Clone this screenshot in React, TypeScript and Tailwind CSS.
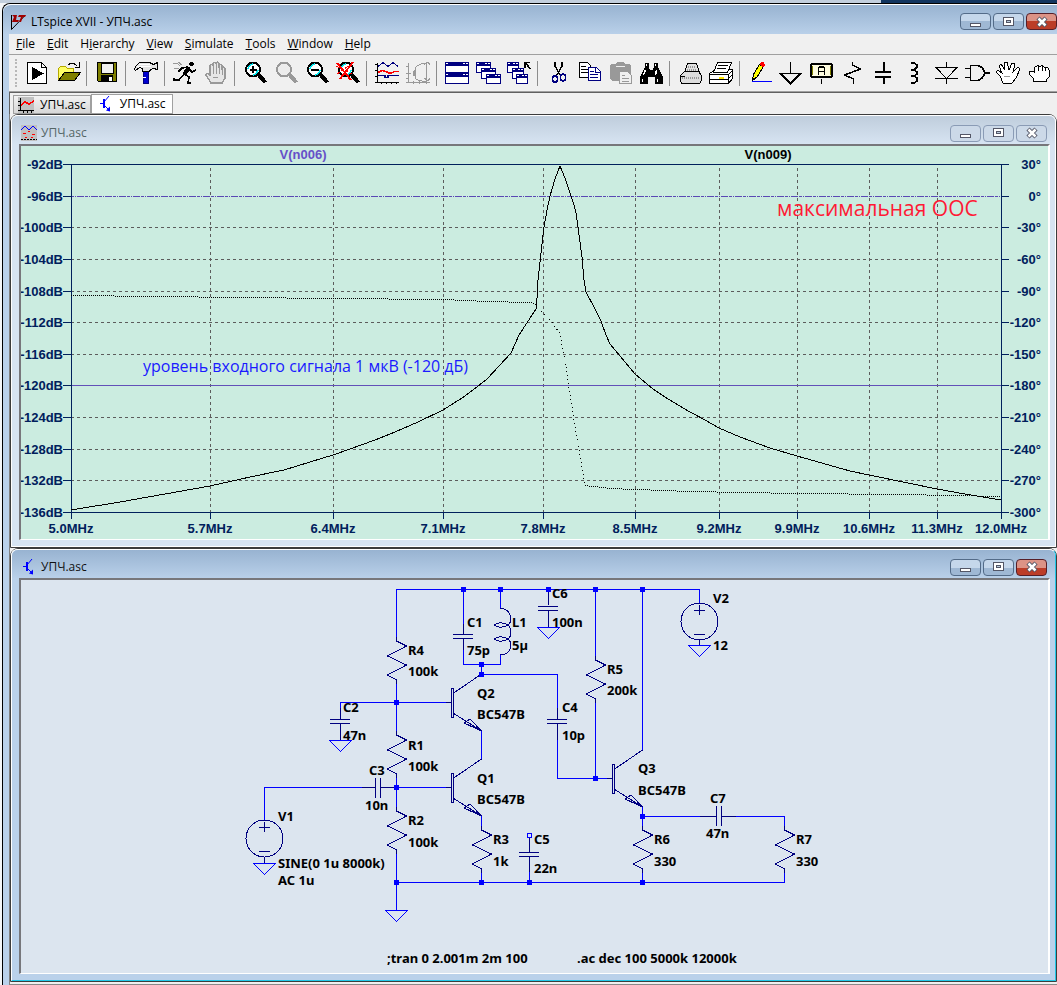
import { Fragment, type ReactNode } from "react";

/* ---------- Toolbar icons, drawn on a 31 x 24 grid ---------- */

const Lens = ({ color = "#000", glass = "#fff" }: { color?: string; glass?: string }) => (
  <>
    <path d="M19 13l7.5 8.5" stroke={color} strokeWidth="4" />
    <circle cx="14" cy="8.5" r="7" fill={glass} stroke={color} strokeWidth="2" />
  </>
);

const Glint = () => (
  <path d="M9 8q1-4 5-5M19 9q-1 4-5 5" stroke="#00e5ee" strokeWidth="1.5" />
);

const Pane = ({ x, y, w = 13, h = 10 }: { x: number; y: number; w?: number; h?: number }) => (
  <>
    <rect x={x + 0.5} y={y + 0.5} width={w} height={h} fill="#fff" stroke="#000080" />
    <rect x={x} y={y} width={w + 1} height="4" fill="#000080" />
    <path d={`M${x + 1} ${y + 1.5}h2M${x + w - 5} ${y + 1.5}h2m1 0h2`} stroke="#fff" />
  </>
);

const icons: Record<string, ReactNode> = {
  Run: (
    <>
      <path d="M6.5 1.5h14l5 5v16h-19z" fill="#fff" stroke="#000" />
      <path d="M20.5 1.5v5h5" stroke="#000" />
      <path d="M11 6l12 6.5-12 6.5z" fill="#000" />
    </>
  ),
  Open: (
    <>
      <path d="M6.5 18.5v-11l2-2h5l2 2h6v5h-9z" fill="#ffff66" stroke="#b5a800" />
      <path d="M12.5 11.5h16l-6 8h-16z" fill="#808000" stroke="#000" />
      <path d="M16 4q4-4 9 1M27.5 1v5.5h-5" stroke="#000" />
    </>
  ),
  Save: (
    <>
      <path d="M6.5 1.5h19v19h-18l-1-1z" fill="#808000" stroke="#000" />
      <path d="M10 2h12v10h-12z" fill="#efefef" stroke="#000" />
      <path d="M10 14h12v7h-12z" fill="#000" />
      <path d="M18 16h3v4h-3z" fill="#fff" />
    </>
  ),
  "Control Panel": (
    <>
      <path d="M13.5 8v14.5h5V8z" fill="#0000d0" stroke="#000080" />
      <path
        d="M4.5 8.500L5.500 5.500L9.500 1.500H19.500L23.500 3.500L27.500 1.500V8.500L23.500 7.500L20.500 8.500L19.500 10.500H12.500V7.500L9.500 6.500L5.500 9.500z"
        fill="#e4e4e4"
        stroke="#000"
      />
      <path d="M9 3.500h11M7 5.500h14" stroke="#fff" />
      <path d="M13 16h3" stroke="#fff" />
    </>
  ),
  Simulate: (
    <>
      <path d="M4 2h4l3 3M5 7h5M9 1l4 3" stroke="#999" />
      <circle cx="22.5" cy="3" r="2.3" fill="#000" />
      <path d="M20 6l-5 8" stroke="#000" strokeWidth="4" />
      <path d="M19 6l-6 1-4 4M20 8l3 3 4-2" stroke="#000" strokeWidth="1.5" />
      <path d="M16 13l4 3-1 6h3M14 14l-4 5H5v-2" stroke="#000" strokeWidth="1.5" />
    </>
  ),
  Halt: (
    <>
      <path
        d="M11 22l-5-8q0-3 4 0V5q2-3 3 0V3q2-3 3 0V2q2-2 3 1v2q2-3 3 0v2q2-2 3 1v9l-3 5h-8z"
        fill="#e6e6e6"
        stroke="#999"
        strokeWidth="1.5"
      />
      <path d="M13.5 4v9M16.5 3v10M19.5 4v9M22.5 6v8M13 16l5 1" stroke="#999" />
    </>
  ),
  "Zoom in": (
    <>
      <Lens />
      <Glint />
      <path d="M14 5v7M10.500 8.500h7" stroke="#000" strokeWidth="2" />
    </>
  ),
  Pan: <Lens color="#999" glass="#ececec" />,
  "Zoom out": (
    <>
      <Lens />
      <Glint />
      <path d="M10 8.500h8" stroke="#000" strokeWidth="2" />
    </>
  ),
  "Zoom full extents": (
    <>
      <Lens />
      <Glint />
      <path d="M5 2l14 17M21 1L8 18" stroke="#f00" strokeWidth="2" />
      <path d="M4 5l18 9M5 13l13-9" stroke="#f00" strokeDasharray="3 2" />
    </>
  ),
  "Autorange y-axis": (
    <>
      <path d="M6.5 2v19.500M4 21.500h24M4 3.500h3M4 9.500h3M4 15.500h3M10.500 21v2M15.500 21v2M20.500 21v2M25.500 21v2" stroke="#000" />
      <path d="M7 5.500l5-4 5 4 5-4 5 4" stroke="#000080" />
      <path d="M7 11.500l4-2 4 1 4 2 5-2h4" stroke="#f00" strokeWidth="1.5" />
      <path d="M7 14.500h7v2h3v-2h11" stroke="#000080" strokeWidth="1.5" />
    </>
  ),
  "Smith chart": (
    <>
      <path d="M6.5 2v19.500M4 21.500h24M4 5.500h3M4 12.500h5M4 17.500h3M11.500 20v3M17.500 20v3M24.500 20v3M24.500 1v20" stroke="#999" />
      <path d="M25 2q-7 0-11 4-3 6 0 12 4 3 11 2M22 4l4-3 2 3M22 17l4 3 2-3" stroke="#999" />
      <path d="M11 10v5M13 7v11" stroke="#999" />
    </>
  ),
  "Tile windows": (
    <>
      <Pane x={4} y={1} w={23} />
      <Pane x={4} y={12} w={23} />
    </>
  ),
  "Cascade windows": (
    <>
      <Pane x={4} y={1} w={14} />
      <Pane x={9} y={7} w={14} />
      <Pane x={14} y={13} w={14} h={9} />
    </>
  ),
  "Close all windows": (
    <>
      <Pane x={4} y={1} w={11} />
      <Pane x={9} y={7} w={11} />
      <Pane x={13} y={13} w={11} h={9} />
      <path d="M22 6.500V1.500h5M22.500 2l5 6" stroke="#000" strokeWidth="1.5" />
    </>
  ),
  Cut: (
    <>
      <path d="M13 1v4l5 9M20 1v4l-5 9" stroke="#000" strokeWidth="1.5" />
      <ellipse cx="13" cy="18" rx="2.500" ry="3.500" stroke="#000080" strokeWidth="1.5" />
      <ellipse cx="21" cy="16.500" rx="2.500" ry="3.500" stroke="#000080" strokeWidth="1.5" />
    </>
  ),
  Copy: (
    <>
      <path d="M6.500 1.500h8l3 3v12h-11z" fill="#fff" stroke="#000" />
      <path d="M8 5.500h5M8 8.500h7M8 11.500h7" stroke="#000" />
      <path d="M15.500 6.500h8l4 4v9h-12z" fill="#fff" stroke="#000080" />
      <path d="M17 10.500h4M17 13.500h8M17 16.500h8M22.500 7v4h5" stroke="#000080" />
    </>
  ),
  Paste: (
    <>
      <path d="M6 4l2-1h4l1-2h7l1 2h4l2 1v14l-2 2H8l-2-2z" fill="#999" />
      <path d="M12 5.500h9" stroke="#eee" />
      <path d="M15.500 10.500h8l4 4v8h-12z" fill="#f0f0f0" stroke="#999" />
      <path d="M18 14.500h3M18 17.500h7M18 20.500h7" stroke="#999" />
    </>
  ),
  Find: (
    <>
      <path d="M10 2h4v4l1 3h3l1-3V2h4v4l5 10v7h-8v-7h-7v7H5v-7l5-10z" fill="#000" />
      <path d="M10.500 9l-2 5M21.500 9l-1 5M7.500 18v3M22.500 18v3M11 4h1M20 4h1" stroke="#fff" strokeWidth="1.5" />
    </>
  ),
  "Print setup": (
    <>
      <path d="M13.500 2.500h9l3 9h-15z" fill="#e2e2e2" stroke="#000" />
      <path d="M6.500 14.500l4-4h14l3 4v5l-2 3h-18l-1-3z" fill="#ddd" stroke="#000" />
      <path d="M14 5.500h7M13 8.500h9M8 16.500h18" stroke="#999" strokeDasharray="1 1" strokeWidth="2" />
      <path d="M6 15.500h5" stroke="#000" />
    </>
  ),
  Print: (
    <>
      <path d="M4.500 12.500l6-4h17v9l-4 5h-19z" fill="#fff" stroke="#000" />
      <path d="M12.500 1.500h14l-4 10h-14z" fill="#fff" stroke="#000" />
      <path d="M13 4.500h10M12 7.500h9M4 13.500h19v9M5 18.500h18M23 14l4-4M23 18l4-4" stroke="#000" />
      <path d="M14 16.500h5" stroke="#ffe600" strokeWidth="2" />
    </>
  ),
  Wire: (
    <>
      <path d="M8 20.500h20" stroke="#00f" />
      <path d="M8.500 19.500l1-6 6-10 4 2-6 10z" fill="#ffff00" stroke="#000" />
      <path d="M8 20v-4l4 2z" fill="#000" />
      <path d="M15 3l2-2h3l1 3-2 3z" fill="#f00" />
    </>
  ),
  Ground: <path d="M15.500 1v11M4 12.500h23M6 13l9.500 9.500L25 13" stroke="#000" strokeWidth="1.5" />,
  "Label net": (
    <>
      <path d="M15.500 18v5" stroke="#000" />
      <rect x="5" y="3" width="21" height="13" rx="2" fill="#fffde0" stroke="#000" strokeWidth="2" />
      <path d="M6.500 5v9M24.500 5v9" stroke="#808000" />
      <path d="M12.500 14V7l1-1h4l1 1v7M12 10.500h7" stroke="#000" strokeWidth="1.5" />
    </>
  ),
  Resistor: <path d="M15.500 1v3l8 4-16 6 9 4v5" stroke="#000" strokeWidth="1.5" />,
  Capacitor: <path d="M15.500 1v9M7 10.500h16M7 15.500h16M15.500 15v8" stroke="#000" strokeWidth="2" />,
  Inductor: <path d="M12 2h3l3 2v2l-3 3h-3h3l3 2v2l-3 2h-3h3l3 2v3l-3 2h-3" stroke="#000" strokeWidth="1.5" />,
  Diode: (
    <>
      <path d="M16.500 1v22M5 17.500h23M5 6.500h23" stroke="#000" strokeWidth="1.5" />
      <path d="M6 6.500h21l-10.500 11z" fill="#f0f0f0" stroke="#000" />
    </>
  ),
  Component: (
    <>
      <path d="M4 7.500h6M4 16.500h6M23 12h6" stroke="#000" strokeWidth="1.5" />
      <path d="M9.500 4.500h7q6 1 7 7.500-1 6-7 7.500h-7z" fill="#f0f0f0" stroke="#000" strokeWidth="1.5" />
    </>
  ),
  Move: (
    <>
      <path
        d="M11 22l-3-7-4-4 2-2 4 3-3-7 2-2 4 6-1-7 3-1 2 8 3-7 3 1-2 8 5-5 2 2-4 9-4 5z"
        fill="#fff"
        stroke="#000"
      />
      <path d="M12 15l6 1" stroke="#999" />
    </>
  ),
  Drag: (
    <>
      <path
        d="M10.500 20.500v-3l-4-4v-3h4l1 1v-5l3-2 2 1 3-1 2 2h3l2 3v6l-3 3v2z"
        fill="#fff"
        stroke="#000"
      />
      <path d="M15.500 6v4M19.500 5v5M22.500 7v3" stroke="#000" />
    </>
  ),
};

const toolGroups = [
  ["Run", "Open"],
  ["Save"],
  ["Control Panel"],
  ["Simulate", "Halt"],
  ["Zoom in", "Pan", "Zoom out", "Zoom full extents"],
  ["Autorange y-axis", "Smith chart"],
  ["Tile windows", "Cascade windows", "Close all windows"],
  ["Cut", "Copy", "Paste", "Find"],
  ["Print setup", "Print"],
  ["Wire", "Ground", "Label net", "Resistor", "Capacitor", "Inductor", "Diode", "Component", "Move", "Drag"],
];

/* [before, accelerator, after] */
const menus = [
  ["", "F", "ile"],
  ["", "E", "dit"],
  ["H", "i", "erarchy"],
  ["", "V", "iew"],
  ["", "S", "imulate"],
  ["", "T", "ools"],
  ["", "W", "indow"],
  ["", "H", "elp"],
];

function Logo() {
  return (
    <svg className="h-4 w-4 shrink-0" viewBox="0 0 16 16" fill="none">
      <path d="M.5 1v14.500L14 1.500" stroke="#000" />
      <path d="M1 1h5l-1 5h3l-1 2H1l2-5zM8 1h7l-1 2-2 0-2 5H8l2-5H7z" fill="#a00000" />
    </svg>
  );
}

function PlotIcon({ muted = false }: { muted?: boolean }) {
  return (
    <svg className="h-4 w-4 shrink-0" viewBox="0 0 16 16" fill="none" shapeRendering="crispEdges">
      <path d="M0 0h16v16H0z" fill="#c0c0c0" />
      {muted ? (
        <>
          <path d="M0 5l4-4 4 4 4-4 4 4" stroke="#0000ff" />
          <path d="M2 8.500h3m2-2h2m2 3h3M4 12.500h2m4 0h2" stroke="#ff0000" />
          <path d="M0 14.500h16" stroke="#000" strokeDasharray="2 1" />
        </>
      ) : (
        <>
          <path d="M2.500 1v13M0 13.500h16M0 4.500h2M0 8.500h2M5.500 14v2M9.500 14v2M13.500 14v2" stroke="#000" />
          <path d="M3 8l4-3 4 2 5-3" stroke="#ff0000" strokeWidth="1.5" />
        </>
      )}
    </svg>
  );
}

function SchematicIcon() {
  return (
    <svg className="h-4 w-4 shrink-0" viewBox="0 0 16 16" fill="none">
      <path d="M2 7.500h4M6 6l5-6M6 9l5 5" stroke="#0000ff" />
      <path d="M5 3h2v9H5zM8 14.500l4-4v5z" fill="#0000ff" />
    </svg>
  );
}

/* Minimize / restore / close */
function CaptionButtons({ active = true }: { active?: boolean }) {
  const base = "flex h-[17px] w-[31px] items-center justify-center rounded-sm border";
  const plain = active
    ? "border-[#536b88] bg-linear-to-b from-[#c5d7eb] from-50% to-[#9fb8d4] to-50%"
    : "border-[#8a9bb5] bg-[#ccd9e8]";
  const close = active
    ? "border-[#561f28] bg-linear-to-b from-[#dc9386] from-50% to-[#bc3d28] to-50%"
    : "border-[#8a9bb5] bg-[#ccd9e8]";
  return (
    <div className="flex shrink-0 gap-0.5">
      <button aria-label="Minimize" className={`${base} ${plain}`}>
        <svg className="h-3 w-3" viewBox="0 0 12 12" shapeRendering="crispEdges">
          <rect x="0.500" y="7.500" width="10" height="3" fill="#fff" stroke="#535666" />
        </svg>
      </button>
      <button aria-label="Restore" className={`${base} ${plain}`}>
        <svg className="h-3 w-3" viewBox="0 0 12 12" shapeRendering="crispEdges">
          <rect x="0.500" y="1.500" width="10" height="8" fill="#fff" stroke="#535666" />
          <rect x="3.500" y="4.500" width="4" height="2" fill="#bcd" stroke="#535666" />
        </svg>
      </button>
      <button aria-label="Close" className={`${base} ${close}`}>
        <svg className="h-3 w-3" viewBox="0 0 12 12">
          <path d="M2 2l8 8M10 2l-8 8" stroke="#535666" strokeWidth="4.5" />
          <path d="M2.500 2.500l7 7M9.500 2.500l-7 7" stroke="#fff" strokeWidth="2.5" />
        </svg>
      </button>
    </div>
  );
}

/* ---------- Waveform plot ---------- */

const gridY = [164, 196, 227, 259, 291, 322, 354, 385, 417, 449, 480, 512];
const gridX = [71, 210, 333, 443, 543, 635, 719, 797, 869, 937, 1001];
const freqs = ["5.0", "5.7", "6.4", "7.1", "7.8", "8.5", "9.2", "9.9", "10.6", "11.3", "12.0"];

const magnitude =
  "71,510 120,502 165,494 210,486 250,477 284,470 310,462 333,455 350,449 375,440 395,432 418,422 443,410 462,398 473,390 487,379 511,353 519,335 536,309 537,298 538,280 541,253 544,227 547,210 550,196 555,179 560,166 565,178 571,196 574,205 576,213 578,227 582,257 584,280 586,292 595,309 601,321 606,335 610,344 635,374 653,389 668,399 690,412 705,420 719,428 740,437 770,448 797,456 850,471 869,475 908,483 937,489 965,494 1001,500";

function Plot() {
  return (
    <svg className="block h-auto w-full bg-[#cbece0]" viewBox="21 146 1027 393" fill="none">
      <g shapeRendering="crispEdges">
        {gridY.slice(2, -1).map((y) =>
          y === 385 ? null : (
            <path key={y} d={`M71 ${y}.5H1001`} stroke="#5c5c5c" strokeDasharray="3 3" />
          ),
        )}
        {gridX.slice(1, -1).map((x) => (
          <path key={x} d={`M${x}.5 168V512`} stroke="#5c5c5c" strokeDasharray="3 3" />
        ))}
        <path d="M71 196.500H1001" stroke="#5a49b4" strokeDasharray="3 1 1 1 7 1" />
        <path d="M71 385.500H1001" stroke="#6250b8" />
        <path d="M63 164.500H1009M63 512.500H1009M71.500 164V519M1001.500 164V519" stroke="#00205c" />
        {gridY.map((y) => (
          <path key={y} d={`M63 ${y}.5h8M1001 ${y}.5h8`} stroke="#00205c" />
        ))}
        {gridX.map((x) => (
          <path key={x} d={`M${x}.5 512v7`} stroke="#00205c" />
        ))}
        <polyline points={magnitude} stroke="#000" />
        <polyline
          points="71,295.500 157,296.500 240,297.500 333,298.500 443,299.500 487,301.500 530,302.500 537,304.500"
          stroke="#000"
          strokeDasharray="1 1"
        />
        <polyline
          points="541,311 552,322 560,334 562,345 565,360 569,388 574,420 580,455 585,485"
          stroke="#000"
          strokeDasharray="1 3"
        />
        <polyline
          points="585,485.500 610,488.500 690,491.500 797,493.500 900,494.500 1001,496.500"
          stroke="#000"
          strokeDasharray="1 1"
        />
      </g>

      <g className="font-['Liberation_Sans',sans-serif] text-[13px] font-bold" fill="#00205c">
        {gridY.map((y, i) => (
          <Fragment key={y}>
            <text x="63" y={y + 5} textAnchor="end">{`${-92 - i * 4}dB`}</text>
            <text x="1041" y={y + 5} textAnchor="end">{`${30 - i * 30}°`}</text>
          </Fragment>
        ))}
        {gridX.map((x, i) => (
          <text key={x} x={x} y="533" textAnchor="middle">{`${freqs[i]}MHz`}</text>
        ))}
        <text x="303" y="159" textAnchor="middle" fill="#6650c8">V(n006)</text>
        <text x="768" y="159" textAnchor="middle" fill="#000">V(n009)</text>
      </g>
      <g className="font-['Open_Sans',sans-serif]">
        <text x="777" y="216" fill="#ff1a35" className="text-[21px]">максимальная ООС</text>
        <text x="143" y="372" fill="#1a1aff" className="text-[16px]">уровень входного сигнала 1 мкВ (-120 дБ)</text>
      </g>
    </svg>
  );
}

/* ---------- Schematic ---------- */

const resistors = [
  [396, 641], [396, 735], [396, 811], [481, 830], [595, 660], [642, 830], [784, 830],
];
const grounds = [[340, 740], [264, 863], [396, 910], [548, 627], [699, 645]];
const junctions = [
  [463, 589], [500, 589], [548, 589], [595, 589], [642, 589], [481, 664], [481, 674], [396, 702],
  [396, 787], [595, 778], [642, 816], [396, 882], [481, 882], [529, 882], [642, 882],
];
/* bar centre of each NPN */
const transistors = [[452, 702], [452, 787], [613, 778]];
const sources = [[264, 838], [699, 621]];
const plates = [[340, 721], [463, 636], [548, 608], [557, 721], [529, 854]];

const labels: [number, number, string][] = [
  [408, 655, "R4"], [408, 676, "100k"],
  [467, 627, "C1"], [467, 655, "75p"],
  [512, 627, "L1"], [512, 650, "5µ"],
  [552, 598, "C6"], [552, 627, "100n"],
  [607, 674, "R5"], [607, 695, "200k"],
  [713, 603, "V2"], [713, 650, "12"],
  [343, 712, "C2"], [343, 740, "47n"],
  [477, 698, "Q2"], [477, 719, "BC547B"],
  [562, 712, "C4"], [562, 740, "10p"],
  [408, 750, "R1"], [408, 771, "100k"],
  [369, 775, "C3"], [365, 810, "10n"],
  [278, 821, "V1"], [278, 868, "SINE(0 1u 8000k)"], [278, 885, "AC 1u"],
  [408, 825, "R2"], [408, 847, "100k"],
  [477, 783, "Q1"], [477, 804, "BC547B"],
  [493, 844, "R3"], [493, 866, "1k"],
  [534, 844, "C5"], [534, 873, "22n"],
  [638, 773, "Q3"], [638, 795, "BC547B"],
  [710, 803, "C7"], [706, 838, "47n"],
  [654, 844, "R6"], [654, 866, "330"],
  [796, 844, "R7"], [796, 866, "330"],
  [387, 963, ";tran 0 2.001m 2m 100"],
  [577, 963, ".ac dec 100 5000k 12000k"],
];

function Schematic() {
  return (
    <svg className="block h-auto w-full bg-[#dce5ef]" viewBox="21 580 1027 393" fill="none">
      <g shapeRendering="crispEdges">
        <path
          stroke="#0000ff"
          d="M396.500 641V589.500H699.500V603M396.500 679V735M396.500 773V811M396.500 849V910M396 882.500H784.500V868
            M463.500 589V634M463.500 639V664.500H500.500V655M500.500 589V608M548.500 589V605M595.500 589V660M595.500 698V778
            M642.500 589V750M481.500 664V674.500H557.500V719M557.500 724V778.500H612M340.500 719V702.500H451
            M264.500 820V787.500H375M381 787.500H451M481.500 731V760M481.500 816V830M481.500 868V882M529.500 857V882
            M642.500 806V830M642.500 868V882M642 816.500H716M722 816.500H784.500V830"
        />
        <path
          stroke="#000080"
          d="M340.500 708V719M340.500 724V740M548.500 592V605M548.500 611V627M529.500 837V852M529.500 857V872
            M362 787.500H375M381 787.500H394M700 816.500H716M722 816.500H736
            M375.500 778v20M380.500 778v20M716.500 806v20M721.500 806v20
            M264.500 857v6M699.500 640v5M557.500 708V719M557.500 724V740M463.500 624V634M463.500 639V650"
        />
        {resistors.map(([x, y]) => (
          <path
            key={`${x}-${y}`}
            d={`M${x}.5 ${y - 4}v4l10 5-19 10 19 9-19 10 9 5v4`}
            stroke="#000080"
          />
        ))}
        {plates.map(([x, y]) => (
          <path key={`${x}-${y}`} d={`M${x - 10} ${y - 2}.5h20M${x - 10} ${y + 2}.5h20`} stroke="#000080" />
        ))}
        {grounds.map(([x, y]) => (
          <path key={`${x}-${y}`} d={`M${x - 11}.5 ${y}.5h22l-11 11z`} stroke="#0000ff" />
        ))}
        {transistors.map(([x, y]) => (
          <path
            key={`${x}-${y}`}
            d={`M${x - 1}.5 ${y - 14}.5h2v29h-2zM${x + 1} ${y - 9}.5L${x + 29}.5 ${y - 28}
              M${x + 1} ${y + 11}L${x + 29}.5 ${y + 29}L${x + 18} ${y + 17}L${x + 12} ${y + 21}L${x + 29}.5 ${y + 29}M${x - 6} ${y}.5h5`}
            stroke="#000080"
          />
        ))}
        {sources.map(([x, y]) => (
          <g key={`${x}-${y}`} stroke="#000080">
            <circle cx={x + 0.5} cy={y + 0.5} r="18.5" />
            <path d={`M${x - 5} ${y - 11}.5h11M${x}.5 ${y - 16}v10M${x - 5} ${y + 13}.5h11`} />
          </g>
        ))}
        <path
          stroke="#000080"
          d="M500.500 608.500C512 609 513 622 508 625C504 628 497 628 494 625C497 622 504 622 508 625
            C512 629 512 636 508 639C504 642 497 642 494 639C497 636 504 636 508 639C513 643 512 654 500.500 655"
        />
        <rect x="527.500" y="833.500" width="4" height="4" fill="#dce5ef" stroke="#0000ff" />
        {junctions.map(([x, y]) => (
          <rect key={`${x}-${y}`} x={x - 2} y={y - 2} width="5" height="5" fill="#0000ff" />
        ))}
      </g>
      <g className="font-['Noto_Sans',sans-serif] text-[13px] font-bold" fill="#000">
        {labels.map(([x, y, text]) => (
          <text key={`${x}-${y}`} x={x} y={y}>{text}</text>
        ))}
      </g>
    </svg>
  );
}

/* ---------- MDI child window ---------- */

function ChildWindow({ icon, active, children }: { icon: ReactNode; active: boolean; children: ReactNode }) {
  return (
    <section className="rounded-t-lg border border-[#3c3c3c]">
      <div
        className={`rounded-t-md border border-t-white border-l-white pr-[5px] pb-1.5 pl-[7px] ${
          active ? "border-r-[#22c8e8] border-b-[#22c8e8] bg-[#bad1ea]" : "border-r-white border-b-white bg-[#d7e4f2]"
        }`}
      >
        <header
          className={`-mr-[5px] -ml-[7px] flex h-7 items-center rounded-t-md pt-1.5 pr-2 pl-[9px] ${
            active
              ? "bg-linear-to-b from-[#98b3d1] to-[#b9d0e9]"
              : "bg-linear-to-b from-[#bfcddc] to-[#d7e4f2]"
          }`}
        >
          {icon}
          <h2 className={`ml-1 flex-1 ${active ? "text-[#111]" : "text-[#566]"}`}>УПЧ.asc</h2>
          <CaptionButtons active={active} />
        </header>
        <div className="border-2 border-b border-t-[#77777b] border-r-white border-b-white border-l-[#77777b]">
          {children}
        </div>
      </div>
    </section>
  );
}

export default function App() {
  return (
    <div className="flex min-h-screen flex-col overflow-hidden bg-[#f4f6f8] font-['Open_Sans',sans-serif] text-[12px] leading-4 text-black">
      <div className="flex h-[3px]">
        <div className="w-5/6 bg-[#c3cfdd]" />
        <div className="flex-1 bg-[#12355f]" />
      </div>

      <main className="ml-0.5 flex flex-1 flex-col rounded-tl-lg border-t border-l border-black bg-[#bad1ea]">
        <header className="flex h-[30px] items-center rounded-tl-lg border-t border-white bg-linear-to-b from-[#98b3d1] to-[#b9d0e9] pt-1 pl-2">
          <Logo />
          <h1 className="ml-1 flex-1">LTspice XVII - УПЧ.asc</h1>
          <CaptionButtons />
        </header>

        <div className="ml-1.5 bg-[#f0f0f0]">
          <nav className="flex h-5 items-center gap-3 pl-[7px]">
            {menus.map(([pre, key, post]) => (
              <button key={pre + key + post}>
                {pre}
                <span className="underline">{key}</span>
                {post}
              </button>
            ))}
          </nav>

          <div className="flex h-[38px] items-center overflow-hidden border-t border-b border-t-[#a0a0a0] border-b-[#a0a0a0] pl-1.5">
            <div className="mr-1 h-7 w-0.5 shrink-0 border-l-2 border-dotted border-[#b8b8b8]" />
            {toolGroups.map((group, i) => (
              <Fragment key={group[0]}>
                {i > 0 && <div className="mr-1 ml-[3px] h-[25px] w-px shrink-0 bg-[#8c8c8c]" />}
                {group.map((name) => (
                  <button key={name} aria-label={name} className="shrink-0">
                    <svg className="h-6 w-[31px]" viewBox="0 0 31 24" fill="none" shapeRendering="crispEdges">
                      {icons[name]}
                    </svg>
                  </button>
                ))}
              </Fragment>
            ))}
          </div>

          <div className="flex h-[22px] items-end border-t border-l border-[#606060] pl-[3px]">
            <button className="flex h-[19px] items-center gap-1.5 border border-[#a0a0a0] bg-linear-to-b from-[#f2f2f2] to-[#d8d8d8] px-1">
              <PlotIcon />
              <span>УПЧ.asc</span>
            </button>
            <button className="flex h-5 items-center gap-1.5 border border-[#a0a0a0] bg-white px-1.5">
              <SchematicIcon />
              <span>УПЧ.asc</span>
            </button>
          </div>
        </div>

        <div className="ml-1.5 flex-1 border-l border-[#808080] bg-[#f0f0f0]">
          <ChildWindow icon={<PlotIcon muted />} active={false}>
            <Plot />
          </ChildWindow>
          <ChildWindow icon={<SchematicIcon />} active>
            <Schematic />
          </ChildWindow>
          <div className="h-[3px] border-b border-[#888]" />
        </div>
      </main>
    </div>
  );
}
